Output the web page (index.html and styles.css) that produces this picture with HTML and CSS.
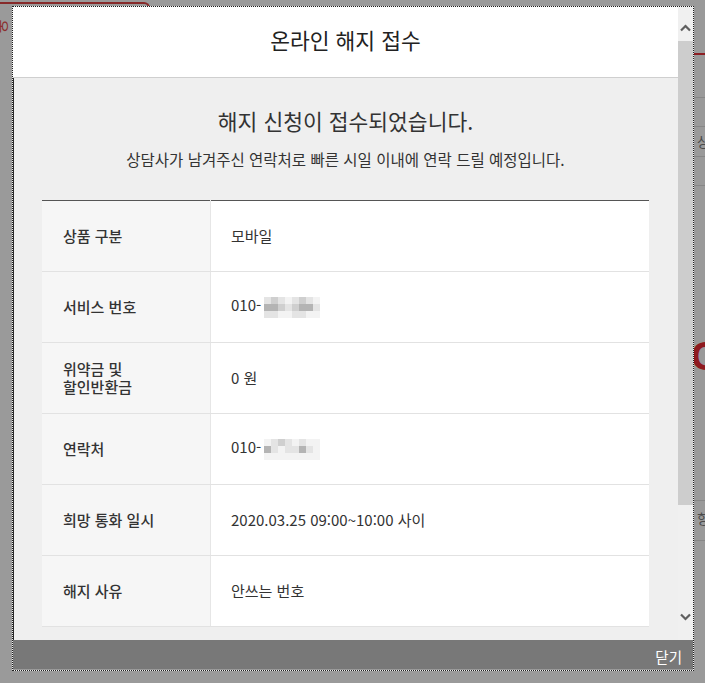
FILE: index.html
```html
<!DOCTYPE html>
<html lang="ko">
<head>
    <meta charset="UTF-8">
    <meta name="viewport" content="width=device-width, initial-scale=1.0">
    <title>온라인 해지 접수</title>
    <link rel="stylesheet" href="styles.css">
</head>
<body>
    <!-- page behind the dimmed overlay -->
    <div class="backdrop">
        <div class="bg-tab"></div>
        <span class="bg-tab-label">온</span>
        <div class="bg-side">
            <div class="bg-red-line"></div>
            <div class="bg-line line-a"></div>
            <div class="bg-line line-b"></div>
            <span class="bg-text text-a">상</span>
            <div class="bg-line line-c"></div>
            <div class="bg-line line-d"></div>
            <span class="bg-big">C</span>
            <div class="bg-line line-e"></div>
            <span class="bg-text text-b">항</span>
            <div class="bg-line line-f"></div>
        </div>
    </div>

    <div class="modal">
        <div class="modal-main">
            <div class="modal-scroll">
                <div class="modal-head">
                    <h2>온라인 해지 접수</h2>
                </div>
                <div class="modal-body">
                    <h3 class="done-title">해지 신청이 접수되었습니다.</h3>
                    <p class="done-desc">상담사가 남겨주신 연락처로 빠른 시일 이내에 연락 드릴 예정입니다.</p>

                    <table class="info-table">
                        <tbody>
                            <tr>
                                <th>상품 구분</th>
                                <td>모바일</td>
                            </tr>
                            <tr>
                                <th>서비스 번호</th>
                                <td>010-<span class="mask">
                                    <i class="c3"></i><i class="c2"></i><i class="c3"></i><i class="c4"></i><i class="c3"></i><i class="c2"></i><i class="c3"></i><i class="c4"></i>
                                    <i class="c1"></i><i class="c1"></i><i class="c2"></i><i class="c3"></i><i class="c2"></i><i class="c1"></i><i class="c1"></i><i class="c3"></i>
                                    <i class="c3"></i><i class="c3"></i><i class="c4"></i><i class="c4"></i><i class="c3"></i><i class="c3"></i><i class="c4"></i><i class="c4"></i>
                                </span></td>
                            </tr>
                            <tr>
                                <th>위약금 및<br>할인반환금</th>
                                <td>0 원</td>
                            </tr>
                            <tr>
                                <th>연락처</th>
                                <td>010-<span class="mask">
                                    <i class="c4"></i><i class="c3"></i><i class="c2"></i><i class="c3"></i><i class="c4"></i><i class="c3"></i><i class="c4"></i><i class="c4"></i>
                                    <i class="c1"></i><i class="c3"></i><i class="c4"></i><i class="c3"></i><i class="c3"></i><i class="c1"></i><i class="c3"></i><i class="c4"></i>
                                    <i class="c4"></i><i class="c4"></i><i class="c4"></i><i class="c4"></i><i class="c4"></i><i class="c4"></i><i class="c4"></i><i class="c4"></i>
                                </span></td>
                            </tr>
                            <tr>
                                <th>희망 통화 일시</th>
                                <td>2020.03.25 09:00~10:00 사이</td>
                            </tr>
                            <tr>
                                <th>해지 사유</th>
                                <td>안쓰는 번호</td>
                            </tr>
                        </tbody>
                    </table>
                </div>
            </div>

            <div class="scrollbar">
                <span class="sb-btn sb-up">
                    <svg width="11" height="8" viewBox="0 0 11 8"><path d="M1 6.5 L5.5 2 L10 6.5" fill="none" stroke="#5f5f5f" stroke-width="2.2"/></svg>
                </span>
                <div class="sb-track">
                    <div class="sb-thumb"></div>
                </div>
                <span class="sb-btn sb-down">
                    <svg width="11" height="8" viewBox="0 0 11 8"><path d="M1 1.5 L5.5 6 L10 1.5" fill="none" stroke="#5f5f5f" stroke-width="2.2"/></svg>
                </span>
            </div>
        </div>
        <div class="modal-foot">
            <button class="btn-close">닫기</button>
        </div>
    </div>
</body>
</html>
```

FILE: styles.css
```css
body, html {
    margin: 0;
    padding: 0;
    width: 705px;
    height: 683px;
    overflow: hidden;
    font-family: "Noto Sans CJK KR", "Noto Sans", sans-serif;
    background-color: #9a9a9a;
    color: #333;
}

/* dimmed page behind the popup */
.backdrop {
    position: absolute;
    inset: 0;
    overflow: hidden;
}
.bg-tab {
    position: absolute;
    left: -10px;
    top: 2px;
    width: 158px;
    height: 20px;
    border-top: 2px solid #872a2a;
    border-right: 2px solid #872a2a;
    border-top-right-radius: 6px;
}
.bg-tab-label {
    position: absolute;
    left: -4px;
    top: 19px;
    font-size: 15px;
    line-height: 15px;
    color: #8c2e2e;
    transform: rotate(90deg);
}
.bg-side {
    position: absolute;
    left: 693px;
    top: 0;
    width: 40px;
    height: 683px;
}
.bg-red-line {
    position: absolute;
    left: 0;
    right: 0;
    top: 53px;
    height: 2px;
    background-color: #8e1f24;
}
.bg-line {
    position: absolute;
    left: 0;
    right: 0;
    height: 1px;
    background-color: #878787;
}
.line-a { top: 97px; }
.line-b { top: 126px; }
.line-c { top: 156px; }
.line-d { top: 185px; }
.line-e { top: 500px; }
.line-f { top: 540px; }
.bg-text {
    position: absolute;
    left: 4px;
    font-size: 14px;
    color: #4a4a4a;
}
.text-a { top: 131px; }
.text-b { top: 508px; }
.bg-big {
    position: absolute;
    left: -2px;
    top: 334px;
    font-family: "Liberation Sans", Arial, sans-serif;
    font-weight: bold;
    font-size: 40px;
    color: #8f1a1f;
}

/* popup */
.modal {
    position: absolute;
    left: 12px;
    top: 6px;
    width: 682px;
    height: 665px;
    box-sizing: border-box;
    border: 1px dotted #1e1e1e;
    display: flex;
    flex-direction: column;
    background-color: #efefef;
}
.modal-main {
    display: flex;
    height: 633px;
}
.modal-scroll {
    flex: 1;
    overflow: hidden;
    box-shadow: inset 1px 0 0 #2a2a2a;
}
.modal-head {
    height: 71px;
    background-color: #fff;
    border-bottom: 1px solid #cfcfcf;
    display: flex;
    align-items: center;
    justify-content: center;
    padding-bottom: 5px;
    box-sizing: border-box;
}
.modal-head h2 {
    margin: 0;
    font-size: 21.5px;
    font-weight: 400;
    color: #222;
}
.modal-body {
    padding: 28px 29px 0;
}
.done-title {
    margin: 0;
    text-align: center;
    font-size: 21.5px;
    line-height: 30px;
    font-weight: 400;
    color: #333;
}
.done-desc {
    margin: 13px 0 0;
    text-align: center;
    font-size: 15.5px;
    line-height: 20px;
    color: #333;
}

.info-table {
    width: 100%;
    margin-top: 31px;
    border-collapse: collapse;
    border-top: 1px solid #555;
    background-color: #fff;
}
.info-table th,
.info-table td {
    height: 70px;
    padding: 0 20px;
    border-bottom: 1px solid #e2e2e2;
    text-align: left;
    font-size: 15px;
    line-height: 18px;
    color: #333;
}
.info-table th {
    width: 127px;
    padding-left: 21px;
    background-color: #f6f6f6;
    border-right: 1px solid #e6e6e6;
    font-weight: 500;
}
.info-table td {
    font-weight: 400;
}

/* blurred phone digits */
.mask {
    display: inline-grid;
    grid-template-columns: repeat(8, 7px);
    grid-auto-rows: 7px;
    margin-left: 3px;
    vertical-align: middle;
    box-shadow: inset 1px 0 0 #777;
}
.mask i {
    display: block;
}
.mask .c1 { background-color: #b4b4b4; }
.mask .c2 { background-color: #cfcfcf; }
.mask .c3 { background-color: #e4e4e4; }
.mask .c4 { background-color: #f3f3f3; }

/* fake scrollbar */
.scrollbar {
    width: 15px;
    display: flex;
    flex-direction: column;
    background-color: #f0f0f0;
}
.sb-btn {
    display: flex;
    justify-content: center;
    height: 34px;
    box-sizing: border-box;
}
.sb-up {
    padding-top: 17px;
}
.sb-down {
    padding-top: 7px;
}
.sb-track {
    flex: 1;
}
.sb-thumb {
    height: 464px;
    background-color: #cdcdcd;
}

.modal-foot {
    flex: 1;
    display: flex;
    justify-content: flex-end;
    align-items: center;
    background-color: #787878;
    box-shadow: inset 0 -1px 0 #9a9a9a;
}
.btn-close {
    margin: 3px 11px 0 0;
    padding: 0;
    border: 0;
    background: none;
    font-family: inherit;
    font-size: 14.5px;
    color: #fff;
    cursor: pointer;
}
```
